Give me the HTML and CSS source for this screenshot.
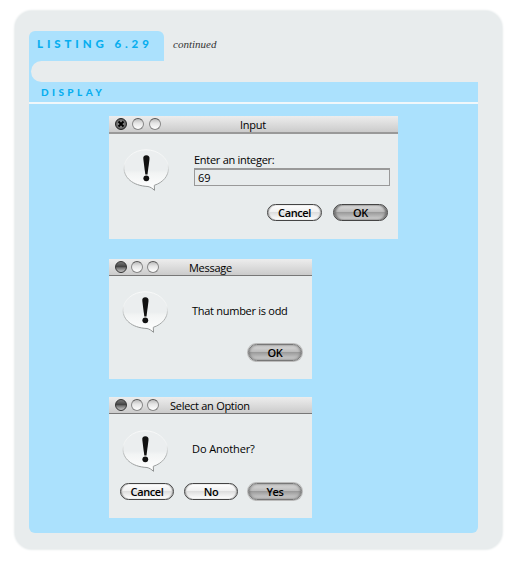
FILE: index.html
```html
<!DOCTYPE html>
<html lang="en">
<head>
<meta charset="utf-8">
<title>Listing 6.29</title>
<link rel="stylesheet" href="styles.css">
</head>
<body>
<svg class="defs" width="0" height="0" aria-hidden="true">
  <defs>
    <linearGradient id="bubbleFill" x1="0" y1="0" x2="0" y2="1">
      <stop offset="0" stop-color="#ebeeef"/>
      <stop offset=".5" stop-color="#ebeeef"/>
      <stop offset=".58" stop-color="#f2f4f4"/>
      <stop offset="1" stop-color="#fff"/>
    </linearGradient>
    <linearGradient id="bubbleEdge" x1="0" y1="0" x2="0" y2="1">
      <stop offset="0" stop-color="#f8f9f9"/>
      <stop offset=".35" stop-color="#eff1f1"/>
      <stop offset=".6" stop-color="#b5b8b8"/>
      <stop offset="1" stop-color="#8b8e8e"/>
    </linearGradient>
    <symbol id="alert" viewBox="0 0 46 44">
      <path d="M23 .8C11 .8 1 9 1 19.300 1 28 9 36.800 25 37.500c2.500.5 4.500 2 6.500 3.800L31.300 36.300C40 33.500 45.500 27 45.500 19.300 45.500 9 35 .8 23 .8z" fill="url(#bubbleFill)" stroke="url(#bubbleEdge)"/>
      <path d="M23.300 6.300c2.300 0 3.400 1.300 3.200 3.700L24.500 25.500h-2.200L20.300 10c-.3-2.400.8-3.700 3-3.700z" fill="#111"/>
      <circle cx="23.300" cy="29.300" r="2.900" fill="#111"/>
    </symbol>
  </defs>
</svg>
<main class="panel">
  <header class="heading">
    <h1 class="tab">LISTING 6.29</h1>
    <span class="continued">continued</span>
  </header>
  <div class="gap"><div class="gap-inner"></div></div>
  <h2 class="display-bar">DISPLAY</h2>
  <div class="stage">
    <section class="dialog input-dialog">
      <div class="titlebar"><i class="dot dark"><svg viewBox="0 0 10 10"><path d="M2.500 2.500l5 5m0-5l-5 5"/></svg></i><i class="dot"></i><i class="dot"></i><span class="title">Input</span></div>
      <div class="content">
        <svg class="alert"><use href="#alert"/></svg>
        <div class="form">
          <label class="label">Enter an integer:</label>
          <div class="field">69</div>
        </div>
      </div>
      <div class="actions"><span class="btn"><b>Cancel</b></span><span class="btn primary"><b>OK</b></span></div>
    </section>
    <section class="dialog message-dialog">
      <div class="titlebar"><i class="dot dark"></i><i class="dot"></i><i class="dot"></i><span class="title">Message</span></div>
      <div class="content">
        <svg class="alert"><use href="#alert"/></svg>
        <p class="message">That number is odd</p>
      </div>
      <div class="actions"><span class="btn primary"><b>OK</b></span></div>
    </section>
    <section class="dialog option-dialog">
      <div class="titlebar"><i class="dot dark"></i><i class="dot"></i><i class="dot"></i><span class="title">Select an Option</span></div>
      <div class="content">
        <svg class="alert"><use href="#alert"/></svg>
        <p class="message">Do Another?</p>
      </div>
      <div class="actions"><span class="btn"><b>Cancel</b></span><span class="btn"><b>No</b></span><span class="btn primary"><b>Yes</b></span></div>
    </section>
  </div>
</main>
</body>
</html>
```
FILE: styles.css
```css
* { box-sizing: border-box; }
body { margin: 0; padding: 11px 0 0 15px; background: #fff; height: 564px; overflow: hidden; }
h1, h2, p { margin: 0; }
.defs { display: block; height: 0; }
.panel {
  width: 487px; height: 538px; padding: 20px 24px 17px 14px;
  border-radius: 17px; background: #e8eced; box-shadow: 0 0 2px 1px #e8eced;
}
.heading { display: flex; height: 30px; }
.tab {
  width: 135px; padding: 0 0 0 8px; border-radius: 6px 6px 0 0; background: #abe1fd;
  color: #08aeef; font: 900 11.5px/26px Lato, sans-serif; letter-spacing: 3.9px; white-space: nowrap;
}
.continued { margin-left: 9px; font: italic 11px/27px "Liberation Serif", serif; color: #333; }
.gap { height: 21px; background: linear-gradient(90deg, #abe1fd 20px, #e8eced 20px); }
.gap-inner { height: 21px; margin-left: 2px; border-radius: 11px 0 0 11px; background: #e8eced; }
.display-bar {
  height: 22px; padding-left: 12px; background: #abe1fd; border-bottom: 2px solid #f1f7fa;
  color: #08aeef; font: 900 10px/21px Lato, sans-serif; letter-spacing: 3.4px;
}
.stage {
  height: 429px; padding: 12px 0 0 80px; display: flex; flex-direction: column; align-items: flex-start;
  background: #abe1fd; border-radius: 0 0 6px 6px;
}
.dialog {
  width: 203px; background: #e8eced; color: #000;
  font: 500 11px/14px "Open Sans", sans-serif; letter-spacing: -.28px;
}
.input-dialog { width: 289px; height: 123px; margin-bottom: 20px; }
.message-dialog { height: 120px; margin-bottom: 18px; }
.option-dialog { height: 121px; }
.titlebar {
  height: 17px; padding: 0 6px; display: flex; align-items: center; gap: 4px;
  border-bottom: 1px solid #777; background: linear-gradient(#ededed, #dedede 45%, #cbcbcb);
}
.input-dialog .titlebar { height: 18px; gap: 5px; border-bottom: 2px solid #999; }
.dot {
  width: 12px; height: 12px; border: 1px solid #888; border-top-color: #555; border-radius: 50%;
  background: linear-gradient(#bbb, #e4e4e4 40%, #fff); display: block; flex: none;
}
.dot.dark { border-color: #333; background: linear-gradient(#777, #444 45%, #777 60%, #c5c5c5); }
.input-dialog .dot.dark { border-color: #222; background: radial-gradient(#aaa, #444); }
.dot svg { display: block; width: 10px; height: 10px; }
.dot path { stroke: #000; stroke-width: 2; }
.title { flex: 1; padding-top: 1px; white-space: nowrap; }
.input-dialog .title { padding-left: 74px; }
.message-dialog .title { padding-left: 26px; }
.option-dialog .title { padding-left: 7px; }
.content { display: flex; height: 70px; padding: 15px 8px 0 14px; }
.message-dialog .content { height: 67px; padding: 15px 8px 0 13px; }
.option-dialog .content { height: 69px; padding: 16px 8px 0 13px; }
.alert { width: 46px; height: 44px; flex: none; }
.form { width: 196px; margin-left: 25px; padding-top: 4px; }
.label { display: block; height: 15px; }
.field {
  height: 18px; padding-left: 3px; border: 1px solid #999; border-top: 2px solid #999;
  font-size: 11px; line-height: 15px; letter-spacing: 0;
}
.message { margin: 13px 0 0 24px; white-space: nowrap; }
.option-dialog .message { margin-top: 12px; letter-spacing: -.1px; }
.actions { display: flex; justify-content: flex-end; gap: 10px; padding-right: 10px; }
.input-dialog .actions { gap: 11px; }
.btn {
  width: 55px; height: 17px; border: 1px solid #444; border-radius: 9px; text-align: center;
  background: linear-gradient(#fff, #f0f0f0 45%, #dedede 50%, #fff);
  box-shadow: inset 1px 0 1px #aaa, inset -1px 0 1px #aaa;
  font-size: 11px; line-height: 15px;
}
.btn b { font-weight: 600; letter-spacing: -.4px; }
.btn.primary {
  background: linear-gradient(#ddd, #bbb 45%, #9b9b9b 50%, #d5d5d5);
  box-shadow: inset 2px 0 2px #777, inset -2px 0 2px #777;
}
.message-dialog .btn, .option-dialog .btn { width: 54px; }
.message-dialog .actions { padding-top: 1px; }
.message-dialog .primary, .option-dialog .primary { border-color: #777; box-shadow: inset 0 0 3px #666, 0 0 0 1px #bbb; }
```
